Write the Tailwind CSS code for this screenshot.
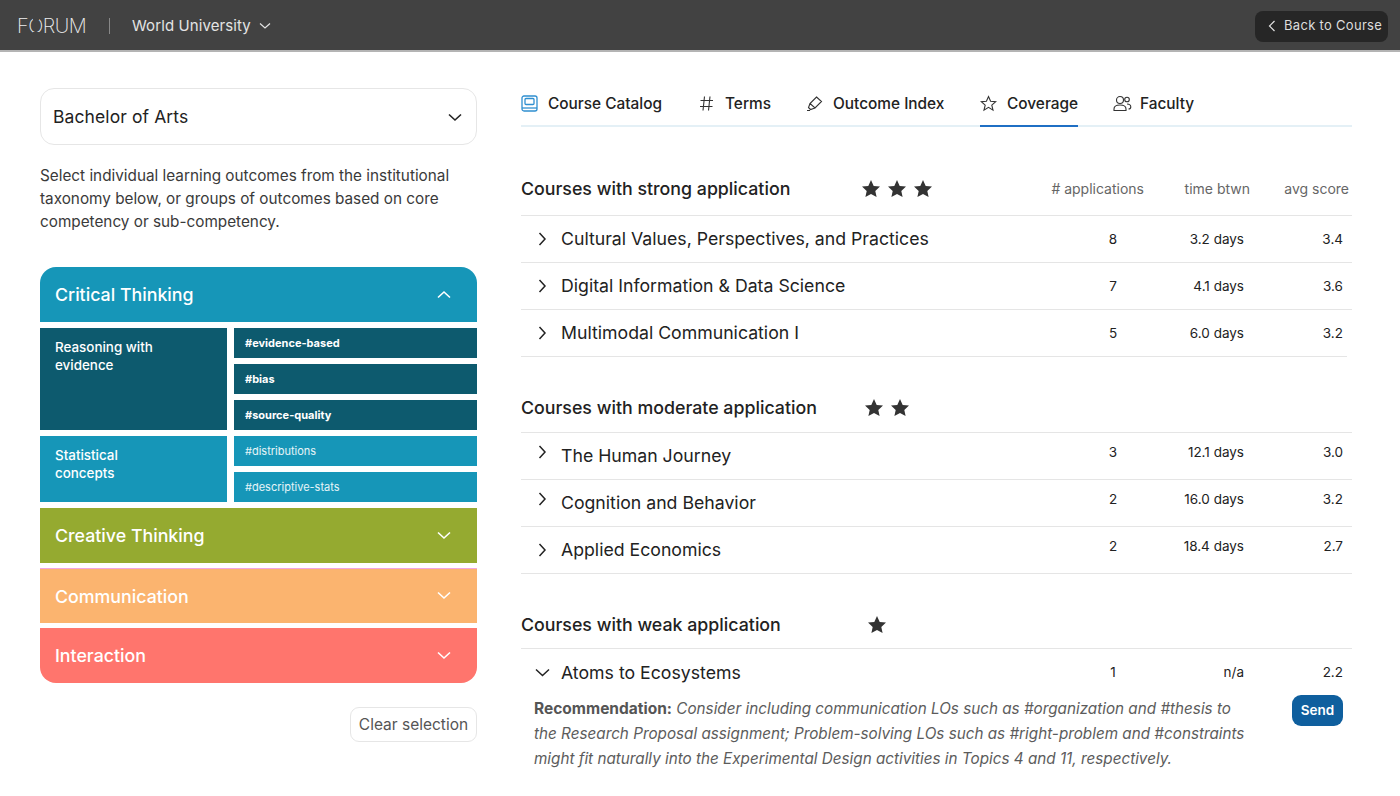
<!DOCTYPE html>
<html lang="en">
<head>
    <meta charset="UTF-8">
    <title>Forum - Coverage</title>
    <script src="https://cdn.jsdelivr.net/npm/@tailwindcss/browser@4"></script>
</head>
<body class="bg-white font-['Inter',sans-serif] text-[#222] h-[796px] overflow-hidden">
    <!-- top bar -->
    <header class="h-[52px] bg-[#424242] border-b-2 border-[#b4b4b4] flex items-center pt-[2px] pl-[17px] pr-[12px] text-[#e4e4e4]">
        <span class="text-[20px] font-extralight tracking-[-0.5px] w-[70px] text-[#eee]">F<span class="relative">O<span class="absolute left-[5px] top-[3px] w-[6px] h-[3px] bg-[#424242]"></span><span class="absolute left-[5px] bottom-[3px] w-[6px] h-[3px] bg-[#424242]"></span></span>RUM</span>
        <span class="w-px h-[16px] bg-[#888] ml-[22px] mr-[22px]"></span>
        <span class="mt-[1px] text-[15px] tracking-[0.1px]">World University</span>
        <svg class="ml-[8px]" width="12" height="12" viewBox="0 0 12 12" fill="none" stroke="#e4e4e4" stroke-width="1.2"><path d="M1 3.5l5 4.5 5-4.5"/></svg>
        <button class="ml-auto h-[31px] w-[133px] rounded-[8px] bg-[#262626] flex items-center pl-[13px] text-[13px] tracking-[0.3px] text-[#ddd]">
            <svg class="mr-[8px]" width="8" height="12" viewBox="0 0 8 12" fill="none" stroke="#e4e4e4" stroke-width="1.2"><path d="M6.5 1L1.5 6l5 5"/></svg>
            Back to Course
        </button>
    </header>

    <main class="flex pl-[40px] pt-[36px]">
        <!-- left column -->
        <section class="w-[437px] shrink-0">
            <div class="h-[57px] rounded-[14px] border border-[#e6e6e6] flex items-center justify-between pl-[12px] pr-[14px] pt-[1px] text-[17.5px] tracking-[0.1px] text-[#222]">
                Bachelor of Arts
                <svg width="14" height="9" viewBox="0 0 14 9" fill="none" stroke="#222" stroke-width="1.6"><path d="M1 1.5l6 5.5 6-5.5"/></svg>
            </div>
            <p class="mt-[19px] text-[15.3px] leading-[23px] text-[#3a3a3a]">Select individual learning outcomes from the institutional taxonomy below, or groups of outcomes based on core competency or sub-competency.</p>

            <div class="mt-[34px] flex flex-col gap-[6px] text-white">
                <div class="h-[55px] rounded-t-[16px] bg-[#1696b8] flex items-center justify-between pt-[2px] pl-[15px] pr-[26px] text-[17.8px] font-medium">
                    Critical Thinking
                    <svg class="-mt-[2px]" width="14" height="9" viewBox="0 0 14 9" fill="none" stroke="white" stroke-width="1.6"><path d="M1 7.5l6-5.5 6 5.5"/></svg>
                </div>
                <div class="grid grid-cols-[187px_243px] gap-x-[7px] gap-y-[6px]">
                    <div class="row-span-3 h-[102px] bg-[#0d5a6e] pl-[15px] pt-[10px] text-[13.4px] leading-[18px] font-medium">Reasoning with<br>evidence</div>
                    <div class="h-[30px] bg-[#0d5a6e] pl-[11px] pt-[1px] flex items-center text-[11px] font-bold">#evidence-based</div>
                    <div class="h-[30px] bg-[#0d5a6e] pl-[11px] pt-[1px] flex items-center text-[11px] font-bold">#bias</div>
                    <div class="h-[30px] bg-[#0d5a6e] pl-[11px] pt-[1px] flex items-center text-[11px] font-bold">#source-quality</div>
                    <div class="row-span-2 h-[66px] bg-[#1696b8] pl-[15px] pt-[10px] text-[13.4px] leading-[18px] font-medium">Statistical<br>concepts</div>
                    <div class="h-[30px] bg-[#1696b8] pl-[11px] pt-[1px] flex items-center text-[11px] text-white/90">#distributions</div>
                    <div class="h-[30px] bg-[#1696b8] pl-[11px] pt-[1px] flex items-center text-[11px] text-white/90">#descriptive-stats</div>
                </div>
                <div class="flex flex-col gap-[5px]">
                    <div class="h-[55px] bg-[#95aa30] flex items-center justify-between pt-[2px] pl-[15px] pr-[26px] text-[17.8px] font-medium">
                        Creative Thinking
                        <svg class="-mt-[3px]" width="14" height="9" viewBox="0 0 14 9" fill="none" stroke="white" stroke-width="1.6"><path d="M1 1.5l6 5.5 6-5.5"/></svg>
                    </div>
                    <div class="h-[55px] bg-[#fbb46f] border-t border-[#f3a6df] flex items-center justify-between pt-[2px] pl-[15px] pr-[26px] text-[17.8px] font-medium">
                        Communication
                        <svg class="-mt-[3px]" width="14" height="9" viewBox="0 0 14 9" fill="none" stroke="white" stroke-width="1.6"><path d="M1 1.5l6 5.5 6-5.5"/></svg>
                    </div>
                    <div class="h-[55px] rounded-b-[16px] bg-[#ff756d] flex items-center justify-between pt-[2px] pl-[15px] pr-[26px] text-[17.8px] font-medium">
                        Interaction
                        <svg class="-mt-[3px]" width="14" height="9" viewBox="0 0 14 9" fill="none" stroke="white" stroke-width="1.6"><path d="M1 1.5l6 5.5 6-5.5"/></svg>
                    </div>
                </div>
            </div>
            <div class="flex justify-end mt-[24px]">
                <button class="h-[35px] w-[127px] rounded-[9px] border border-[#e6e6e6] text-[15.5px] text-[#555]">Clear selection</button>
            </div>
        </section>

        <!-- right column -->
        <section class="ml-[44px] w-[831px] shrink-0">
            <nav class="h-[39px] border-b-2 border-[#e4f0f6] flex text-[15.4px] font-medium text-[#222]">
                <div class="flex items-start pt-[4px] w-[177px]">
                    <svg class="mr-[10px] mt-[3px]" width="17" height="17" viewBox="0 0 17 17" fill="none" stroke="#2f8fd0" stroke-width="1.3"><rect x="1" y="1" width="15" height="15" rx="2"/><rect x="4" y="3.5" width="9" height="6" rx="1"/><path d="M1 13h15"/></svg>
                    Course Catalog
                </div>
                <div class="flex items-start pt-[4px] w-[108px]">
                    <svg class="ml-[1px] mr-[11px] mt-[3px]" width="15" height="17" viewBox="0 0 15 17" fill="none" stroke="#333" stroke-width="1.1"><path d="M5.5 1.5L4 15.5M11 1.5L9.5 15.5M1.5 5.5h12.5M1 11.5h12.5"/></svg>
                    Terms
                </div>
                <div class="flex items-start pt-[4px] w-[174px]">
                    <svg class="mr-[10px] mt-[3px]" width="17" height="17" viewBox="0 0 17 17" fill="none" stroke="#333" stroke-width="1.1"><path d="M10.5 2l5 4.5-6.5 6.500-5-4.500zM4 8.500L2.500 12.500l2 2 4.500-1.500M1 15.500h3"/></svg>
                    Outcome Index
                </div>
                <div class="relative flex items-start pt-[4px] w-[133px]">
                    <svg class="mr-[10px] mt-[3px]" width="17" height="17" viewBox="0 0 17 17" fill="none" stroke="#333" stroke-width="1.1"><path d="M8.5 1.500l2.100 4.700 5.100.5-3.900 3.400 1.200 5-4.500-2.700-4.500 2.700 1.200-5L1.300 6.700l5.100-.5z"/></svg>
                    Coverage
                    <span class="absolute left-0 top-[37px] w-[98px] h-[2px] bg-[#1f6fc4]"></span>
                </div>
                <div class="flex items-start pt-[4px]">
                    <svg class="mr-[8px] mt-[3px]" width="19" height="17" viewBox="0 0 19 17" fill="none" stroke="#333" stroke-width="1.1"><circle cx="7" cy="5" r="3.500"/><circle cx="14" cy="4.500" r="2.300"/><path d="M1 15.500v-1.500c0-2.500 2-4 6-4s6 1.500 6 4v1.500zM14 9c2.500 0 3.800 1.200 3.800 3 0 1.300-1 2-2.300 2"/></svg>
                    Faculty
                </div>
            </nav>

            <!-- strong -->
            <div class="mt-[45px] h-[44px] pb-[9px] border-b border-[#e5e5e5] grid grid-cols-[341px_170px_1fr_106px_99px] items-center pr-[3px]">
                <h2 class="text-[17.8px] font-medium">Courses with strong application</h2>
                <div class="flex gap-[8px] mb-[2px]">
                    <svg width="18" height="17" viewBox="0 0 18 17" fill="#333"><path d="M9 0l2.700 5.900 6.300.7-4.700 4.300 1.300 6.100L9 14l-5.600 3 1.300-6.100L0 6.600l6.300-.7z"/></svg>
                    <svg width="18" height="17" viewBox="0 0 18 17" fill="#333"><path d="M9 0l2.700 5.900 6.300.7-4.700 4.300 1.300 6.100L9 14l-5.600 3 1.300-6.100L0 6.600l6.300-.7z"/></svg>
                    <svg width="18" height="17" viewBox="0 0 18 17" fill="#333"><path d="M9 0l2.700 5.900 6.300.7-4.700 4.300 1.300 6.100L9 14l-5.600 3 1.300-6.100L0 6.600l6.300-.7z"/></svg>
                </div>
                <div class="text-right text-[14px] text-[#666] mb-[2px]"># applications</div>
                <div class="text-right text-[14px] text-[#666] mb-[2px]">time btwn</div>
                <div class="text-right text-[14px] text-[#666] mb-[2px]">avg score</div>
            </div>
            <div class="h-[47px] border-b border-[#e5e5e5] grid grid-cols-[23px_1fr_60px_101px_99px] items-center pl-[17px] pr-[9px]">
                <svg width="9" height="14" viewBox="0 0 9 14" fill="none" stroke="#222" stroke-width="1.5"><path d="M1.500 1l5.500 6-5.500 6"/></svg>
                <span class="text-[17.7px]">Cultural Values, Perspectives, and Practices</span>
                <span class="text-center text-[13.5px]">8</span><span class="text-right text-[13.5px]">3.2 days</span><span class="text-right text-[13.5px]">3.4</span>
            </div>
            <div class="h-[47px] border-b border-[#e5e5e5] grid grid-cols-[23px_1fr_60px_101px_99px] items-center pl-[17px] pr-[9px]">
                <svg width="9" height="14" viewBox="0 0 9 14" fill="none" stroke="#222" stroke-width="1.5"><path d="M1.500 1l5.500 6-5.500 6"/></svg>
                <span class="text-[17.7px]">Digital Information &amp; Data Science</span>
                <span class="text-center text-[13.5px]">7</span><span class="text-right text-[13.5px]">4.1 days</span><span class="text-right text-[13.5px]">3.6</span>
            </div>
            <div class="h-[47px] w-[826px] border-b border-[#e5e5e5] grid grid-cols-[23px_1fr_60px_101px_99px] items-center pl-[17px] pr-[4px]">
                <svg width="9" height="14" viewBox="0 0 9 14" fill="none" stroke="#222" stroke-width="1.5"><path d="M1.500 1l5.500 6-5.500 6"/></svg>
                <span class="text-[17.7px]">Multimodal Communication I</span>
                <span class="text-center text-[13.5px]">5</span><span class="text-right text-[13.5px]">6.0 days</span><span class="text-right text-[13.5px]">3.2</span>
            </div>

            <!-- moderate -->
            <div class="mt-[35px] h-[41px] pb-[6px] border-b border-[#e5e5e5] grid grid-cols-[344px_1fr] items-center">
                <h2 class="text-[17.8px] font-medium mb-[1px]">Courses with moderate application</h2>
                <div class="flex gap-[8px] mb-[3px]">
                    <svg width="18" height="17" viewBox="0 0 18 17" fill="#333"><path d="M9 0l2.700 5.900 6.300.7-4.700 4.300 1.300 6.100L9 14l-5.600 3 1.300-6.100L0 6.600l6.300-.7z"/></svg>
                    <svg width="18" height="17" viewBox="0 0 18 17" fill="#333"><path d="M9 0l2.700 5.900 6.300.7-4.700 4.300 1.300 6.100L9 14l-5.600 3 1.300-6.100L0 6.600l6.300-.7z"/></svg>
                </div>
            </div>
            <div class="h-[47px] border-b border-[#e5e5e5] grid grid-cols-[23px_1fr_60px_101px_99px] items-center pl-[17px] pr-[9px]">
                <svg class="mb-[8px]" width="9" height="14" viewBox="0 0 9 14" fill="none" stroke="#222" stroke-width="1.5"><path d="M1.500 1l5.500 6-5.500 6"/></svg>
                <span class="text-[17.7px] mt-px">The Human Journey</span>
                <span class="text-center text-[13.5px] mb-[7px]">3</span><span class="text-right text-[13.5px] mb-[7px]">12.1 days</span><span class="text-right text-[13.5px] mb-[7px]">3.0</span>
            </div>
            <div class="h-[47px] border-b border-[#e5e5e5] grid grid-cols-[23px_1fr_60px_101px_99px] items-center pl-[17px] pr-[9px]">
                <svg class="mb-[8px]" width="9" height="14" viewBox="0 0 9 14" fill="none" stroke="#222" stroke-width="1.5"><path d="M1.500 1l5.500 6-5.500 6"/></svg>
                <span class="text-[17.7px] mt-px">Cognition and Behavior</span>
                <span class="text-center text-[13.5px] mb-[7px]">2</span><span class="text-right text-[13.5px] mb-[7px]">16.0 days</span><span class="text-right text-[13.5px] mb-[7px]">3.2</span>
            </div>
            <div class="h-[47px] border-b border-[#e5e5e5] grid grid-cols-[23px_1fr_60px_101px_99px] items-center pl-[17px] pr-[9px]">
                <svg width="9" height="14" viewBox="0 0 9 14" fill="none" stroke="#222" stroke-width="1.5"><path d="M1.500 1l5.500 6-5.500 6"/></svg>
                <span class="text-[17.7px] mt-px">Applied Economics</span>
                <span class="text-center text-[13.5px] mb-[7px]">2</span><span class="text-right text-[13.5px] mb-[7px]">18.4 days</span><span class="text-right text-[13.5px] mb-[7px]">2.7</span>
            </div>

            <!-- weak -->
            <div class="mt-[34px] h-[41px] pb-[6px] border-b border-[#e5e5e5] grid grid-cols-[347px_1fr] items-center">
                <h2 class="text-[17.8px] font-medium">Courses with weak application</h2>
                <svg class="mb-[2px]" width="18" height="17" viewBox="0 0 18 17" fill="#333"><path d="M9 0l2.700 5.900 6.300.7-4.700 4.300 1.300 6.100L9 14l-5.600 3 1.300-6.100L0 6.600l6.300-.7z"/></svg>
            </div>
            <div class="h-[47px] grid grid-cols-[26px_1fr_60px_101px_99px] items-center pl-[14px] pr-[9px]">
                <svg width="15" height="9" viewBox="0 0 15 9" fill="none" stroke="#222" stroke-width="1.5"><path d="M1 1.500l6.500 6 6.500-6"/></svg>
                <span class="text-[17.7px] mt-px">Atoms to Ecosystems</span>
                <span class="text-center text-[13.5px]">1</span><span class="text-right text-[13.5px]">n/a</span><span class="text-right text-[13.5px]">2.2</span>
            </div>
            <div class="flex pl-[13px] pr-[9px]">
                <p class="w-[712px] text-[15.25px] leading-[25px] italic text-[#5c5c5c]"><b class="not-italic font-bold text-[15.5px] text-[#555]">Recommendation:</b> Consider including communication LOs such as #organization and #thesis to the Research Proposal assignment; Problem-solving LOs such as #right-problem and #constraints might fit naturally into the Experimental Design activities in Topics 4 and 11, respectively.</p>
                <button class="ml-auto mt-[-1px] h-[31px] w-[51px] rounded-[9px] bg-[#0f5f9e] text-white text-[13.5px] font-semibold">Send</button>
            </div>
        </section>
    </main>
</body>
</html>
